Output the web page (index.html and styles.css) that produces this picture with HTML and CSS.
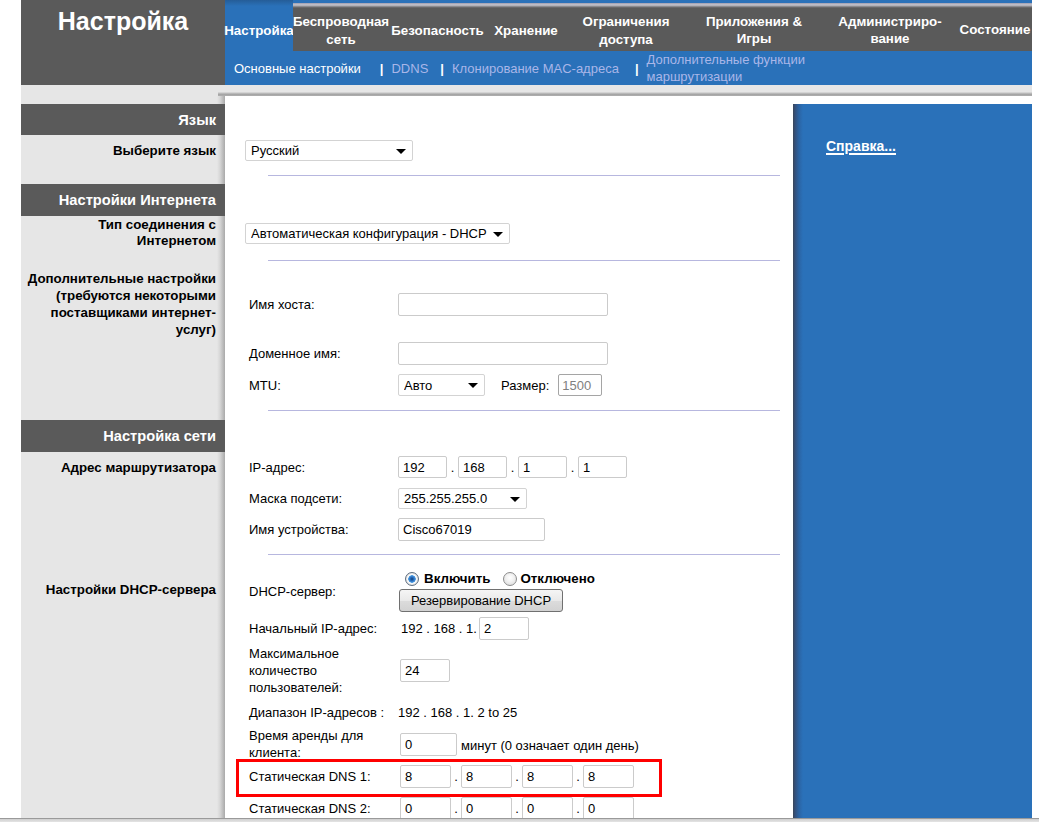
FILE: index.html
```html
<!DOCTYPE html>
<html lang="ru">
<head>
<meta charset="utf-8">
<title>Настройка</title>
<link rel="stylesheet" href="styles.css">
</head>
<body>
<div class="page">
  <header class="header">
    <div class="brand">Настройка</div>
    <div class="nav">
      <nav class="tabs">
        <div class="tab tab-active low t-setup">Настройка</div>
        <div class="tab low t-wireless">Беспроводная<br>сеть</div>
        <div class="tab low t-security">Безопасность</div>
        <div class="tab low t-storage">Хранение</div>
        <div class="tab low t-access">Ограничения<br>доступа</div>
        <div class="tab t-apps">Приложения &amp;<br>Игры</div>
        <div class="tab t-admin">Администриро-<br>вание</div>
        <div class="tab t-status">Состояние</div>
      </nav>
      <nav class="subnav">
        <span class="sub-current">Основные настройки</span>
        <span class="sep sep-first">|</span>
        <span class="sub-link">DDNS</span>
        <span class="sep">|</span>
        <span class="sub-link">Клонирование MAC-адреса</span>
        <span class="sep sep-wide">|</span>
        <span class="sub-link">Дополнительные функции<br>маршрутизации</span>
      </nav>
    </div>
  </header>

  <div class="band"><div class="band-edge"></div></div>

  <main class="main">
    <div class="side"></div>
    <div class="cell"></div>

    <div class="side-head">Язык</div>
    <div class="cell"></div>

    <div class="side side-label lbl-lang">Выберите язык</div>
    <div class="cell cell-lang">
      <div class="select-wrap sel-lang"><select class="select"><option>Русский</option></select></div>
      <div class="divider"></div>
    </div>

    <div class="side-head">Настройки Интернета</div>
    <div class="cell"></div>

    <div class="side side-label lbl-conn">Тип соединения с<br>Интернетом</div>
    <div class="cell cell-conn">
      <div class="select-wrap sel-conn"><select class="select"><option>Автоматическая конфигурация - DHCP</option></select></div>
      <div class="divider"></div>
    </div>

    <div class="side side-label lbl-opt">Дополнительные настройки<br>(требуются некоторыми<br>поставщиками интернет-<br>услуг)</div>
    <div class="cell cell-opt">
      <div class="frow row-host"><span class="flabel">Имя хоста:</span><input class="text w-long" type="text"></div>
      <div class="frow row-domain"><span class="flabel">Доменное имя:</span><input class="text w-long" type="text"></div>
      <div class="frow row-mtu">
        <span class="flabel">MTU:</span>
        <div class="select-wrap sel-mtu"><select class="select"><option>Авто</option></select></div>
        <span class="size-label">Размер:</span>
        <input class="text size-input" type="text" value="1500" disabled>
      </div>
      <div class="divider"></div>
    </div>

    <div class="side-head">Настройка сети</div>
    <div class="cell"></div>

    <div class="side side-label lbl-router">Адрес маршрутизатора</div>
    <div class="cell cell-router">
      <div class="frow row-ip">
        <span class="flabel">IP-адрес:</span>
        <input class="text octet" type="text" value="192"><span class="dot">.</span>
        <input class="text octet" type="text" value="168"><span class="dot">.</span>
        <input class="text octet" type="text" value="1"><span class="dot">.</span>
        <input class="text octet" type="text" value="1">
      </div>
      <div class="frow row-mask">
        <span class="flabel">Маска подсети:</span>
        <div class="select-wrap sel-mask"><select class="select"><option>255.255.255.0</option></select></div>
      </div>
      <div class="frow row-name">
        <span class="flabel">Имя устройства:</span>
        <input class="text w-name" type="text" value="Cisco67019">
      </div>
      <div class="divider"></div>
    </div>

    <div class="side side-label lbl-dhcp">Настройки DHCP-сервера</div>
    <div class="cell cell-dhcp">
      <div class="frow row-dhcp">
        <span class="flabel">DHCP-сервер:</span>
        <div class="dhcp-ctrl">
          <div class="radios">
            <label class="radio-opt"><input class="radio" type="radio" name="dhcp" checked>Включить</label>
            <label class="radio-opt radio-off"><input class="radio" type="radio" name="dhcp">Отключено</label>
          </div>
          <button class="btn" type="button">Резервирование DHCP</button>
        </div>
      </div>
      <div class="frow row-start">
        <span class="flabel">Начальный IP-адрес:</span>
        <span class="static-ip">192 . 168 . 1.</span>
        <input class="text w-short" type="text" value="2">
      </div>
      <div class="frow row-max">
        <span class="flabel">Максимальное<br>количество<br>пользователей:</span>
        <input class="text w-short" type="text" value="24">
      </div>
      <div class="frow row-range">
        <span class="flabel">Диапазон IP-адресов :</span>
        <span class="range-val">192 . 168 . 1. 2 to 25</span>
      </div>
      <div class="frow row-lease">
        <span class="flabel">Время аренды для<br>клиента:</span>
        <input class="text w-lease" type="text" value="0">
        <span class="lease-note">минут (0 означает один день)</span>
      </div>
      <div class="highlight">
        <div class="frow row-dns">
          <span class="flabel">Статическая DNS 1:</span>
          <input class="text dns" type="text" value="8"><span class="dot">.</span>
          <input class="text dns" type="text" value="8"><span class="dot">.</span>
          <input class="text dns" type="text" value="8"><span class="dot">.</span>
          <input class="text dns" type="text" value="8">
        </div>
      </div>
      <div class="frow row-dns2">
        <span class="flabel">Статическая DNS 2:</span>
        <input class="text dns" type="text" value="0"><span class="dot">.</span>
        <input class="text dns" type="text" value="0"><span class="dot">.</span>
        <input class="text dns" type="text" value="0"><span class="dot">.</span>
        <input class="text dns" type="text" value="0">
      </div>
    </div>

    <aside class="help"><a class="help-link" href="#">Справка...</a></aside>
  </main>
</div>
<div class="window-edge"></div>
</body>
</html>
```

FILE: styles.css
```css
* { box-sizing: border-box; }
html, body { margin: 0; padding: 0; }
body {
  background: #fff;
  font-family: "Liberation Sans", Arial, sans-serif;
  font-size: 13px;
  color: #000;
  overflow: hidden;
}
.page { width: 1011px; margin-left: 21px; }

/* header */
.header { display: flex; height: 85px; }
.brand {
  width: 204px;
  background: #5a5a5a;
  color: #fff;
  font-weight: bold;
  font-size: 25px;
  line-height: 28px;
  text-align: center;
  padding-top: 7px;
}
.nav { width: 807px; display: flex; flex-direction: column; }
.tabs { display: flex; height: 51px; }
.tab {
  display: flex;
  align-items: center;
  justify-content: center;
  text-align: center;
  color: #fff;
  font-weight: bold;
  font-size: 13.33px;
  line-height: 17px;
  padding-top: 8px;
  white-space: nowrap;
  background: linear-gradient(to bottom, #2a71b9 0, #2a71b9 3px, #9d9db0 3px, #c6c6ce 5px, #767679 7px, #5a5a5a 8px);
}
.tab.low { padding-top: 11px; line-height: 18px; }
.tab-active { background: linear-gradient(to bottom, #255d98 0, #2a71b9 6px); }
.t-setup { width: 68px; }
.t-wireless { width: 96px; }
.t-security { width: 97px; }
.t-storage { width: 80px; }
.t-access { width: 120px; }
.t-apps { width: 136px; }
.t-admin { width: 136px; }
.t-status { width: 74px; }

.subnav {
  height: 34px;
  background: #2a71b9;
  display: flex;
  align-items: center;
  padding-left: 9px;
  color: #fff;
  font-size: 13px;
  line-height: 17px;
}
.sub-link { color: #a9b6e8; }
.sep { color: #fff; font-weight: bold; margin: 0 8px 0 12px; }
.sep-first { margin-left: 19px; }
.sep-wide { margin-left: 16px; }

/* band between header and body */
.band { height: 11px; background: #e6e6e6; }
.band-edge {
  margin-left: 197px;
  height: 11px;
  background: linear-gradient(to bottom, #e6e6e6 0, #e6e6e6 7px, #c2c2c2 8px, #9c9c9c 10px, #bcbcbc 11px);
}

/* main grid */
.main {
  display: grid;
  grid-template-columns: 204px 568px 239px;
  grid-template-rows: 8px 31px 49px 32px 49px 155px 32px 113px 260px;
}
.side, .side-head { grid-column: 1; }
.cell { grid-column: 2; background: #fff; }
.side {
  background: linear-gradient(to right, #e6e6e6 0, #e6e6e6 196px, #d6d6d6 199px, #a9a9a9 204px);
}
.side-head {
  background: #5a5a5a;
  color: #fff;
  font-weight: bold;
  font-size: 14.67px;
  display: flex;
  align-items: center;
  justify-content: flex-end;
  padding-right: 9px;
}
.side-label {
  text-align: right;
  font-weight: bold;
  font-size: 13.33px;
  line-height: 17px;
  padding-right: 9px;
  white-space: nowrap;
}
.lbl-lang { padding-top: 7px; }
.lbl-conn { padding-top: 1px; line-height: 16px; }
.lbl-opt { padding-top: 5px; }
.lbl-router { padding-top: 7px; }
.lbl-dhcp { padding-top: 16px; }

.divider { height: 1px; width: 512px; margin-left: 43px; background: #b7b7df; }

/* selects */
.select-wrap { position: relative; height: 21px; }
.select-wrap::after {
  content: "";
  position: absolute;
  right: 7px;
  top: 50%;
  margin-top: -2px;
  border-left: 5px solid transparent;
  border-right: 5px solid transparent;
  border-top: 5px solid #000;
  pointer-events: none;
}
.select {
  -webkit-appearance: none;
  appearance: none;
  width: 100%;
  height: 100%;
  border: 1px solid #d3d3d3;
  border-radius: 2px;
  background: #fff;
  font-family: inherit;
  font-size: 13px;
  color: #000;
  padding: 0 0 0 5px;
  margin: 0;
}
.cell-lang { padding-top: 5px; }
.sel-lang { width: 168px; margin-left: 20px; }
.cell-lang .divider { margin-top: 14px; }
.cell-conn { padding-top: 7px; }
.sel-conn { width: 265px; margin-left: 20px; }
.cell-conn .divider { margin-top: 16px; }

/* form rows */
.frow { display: flex; align-items: center; padding-left: 24px; line-height: 17px; }
.flabel { width: 149px; flex-shrink: 0; }
.text {
  height: 23px;
  border: 1px solid #cbcbcb;
  border-radius: 2px;
  background: #fff;
  font-family: inherit;
  font-size: 13px;
  color: #000;
  padding: 0 4px;
  margin: 0;
}
.w-long { width: 210px; }
.row-host { margin-top: 28px; }
.row-domain { margin-top: 26px; }
.row-mtu { margin-top: 9px; }
.sel-mtu { width: 87px; height: 22px; }
.size-label { margin-left: 16px; margin-right: 9px; }
.size-input { width: 44px; height: 22px; border-color: #a5a5a5; color: #808080; padding: 0 3px; }
.cell-opt .divider { margin-top: 14px; }

.dot { width: 11px; text-align: center; }
.octet { width: 49px; height: 22px; }
.row-ip { margin-top: 4px; }
.row-mask { margin-top: 10px; }
.sel-mask { width: 129px; }
.row-name { margin-top: 9px; }
.w-name { width: 147px; }
.cell-router .divider { margin-top: 13px; }

/* dhcp */
.cell-dhcp .flabel { width: 151px; }
.row-dhcp { margin-top: 5px; }
.radios { display: flex; height: 17px; align-items: center; padding-left: 5px; font-weight: bold; font-size: 13.33px; }
.radio-opt { display: flex; align-items: center; }
.radio-off { margin-left: 13px; }
.radio {
  -webkit-appearance: none;
  appearance: none;
  width: 14px;
  height: 14px;
  margin: 0 5px 0 0;
  border-radius: 50%;
  border: 1px solid #8c8c8c;
  background: radial-gradient(circle at 50% 40%, #ffffff 0, #f2f2f2 40%, #d6d6d6 100%);
}
.radio-off .radio { margin-right: 3px; }
.radio:checked {
  border-color: #5d6d80;
  background: radial-gradient(circle at 50% 50%, #0f3f7a 0, #2a6fc0 2px, #4d9be0 3.5px, #ffffff 4px, #e9e9e9 5.5px, #c9c9c9 6.5px);
}
.btn {
  display: block;
  margin-top: 2px;
  margin-left: -1px;
  height: 23px;
  padding: 0 11px;
  border: 1px solid #707070;
  border-radius: 3px;
  background: linear-gradient(to bottom, #f5f5f5 0, #e9e9e9 50%, #dcdcdc 51%, #d2d2d2 100%);
  font-family: inherit;
  font-size: 13px;
  color: #000;
}
.row-start { margin-top: 5px; }
.static-ip { margin-left: 1px; margin-right: 2px; }
.w-short { width: 50px; }
.row-max { margin-top: 5px; }
.row-range { margin-top: 8px; }
.range-val { margin-left: -2px; }
.row-lease { margin-top: 6px; }
.w-lease { width: 57px; }
.lease-note { margin-left: 4px; padding-top: 2px; }

.highlight {
  margin: -2px 0 0 11px;
  width: 426px;
  border: 3px solid #ff0000;
  padding: 3px 0 6px 0;
}
.highlight .frow { padding-left: 10px; }
.dns { width: 51px; }
.row-dns .dot, .row-dns2 .dot { width: 10px; }

/* help */
.help {
  grid-column: 3;
  grid-row: 2 / -1;
  background: linear-gradient(to right, #3b4658 0, #34507a 2px, #2b64a4 6px, #2a71b9 10px);
  padding: 34px 0 0 33px;
}
.help-link {
  color: #fff;
  font-weight: bold;
  font-size: 14px;
  line-height: 17px;
  text-decoration: underline;
  text-decoration-thickness: 2px;
  text-underline-offset: 2px;
}

.window-edge {
  position: fixed;
  left: 0;
  right: 0;
  bottom: 0;
  height: 4px;
  background: linear-gradient(to bottom, #9a9a9a 0, #9a9a9a 1px, #cfcfcf 1px, #e4e4e4 4px);
}
```
